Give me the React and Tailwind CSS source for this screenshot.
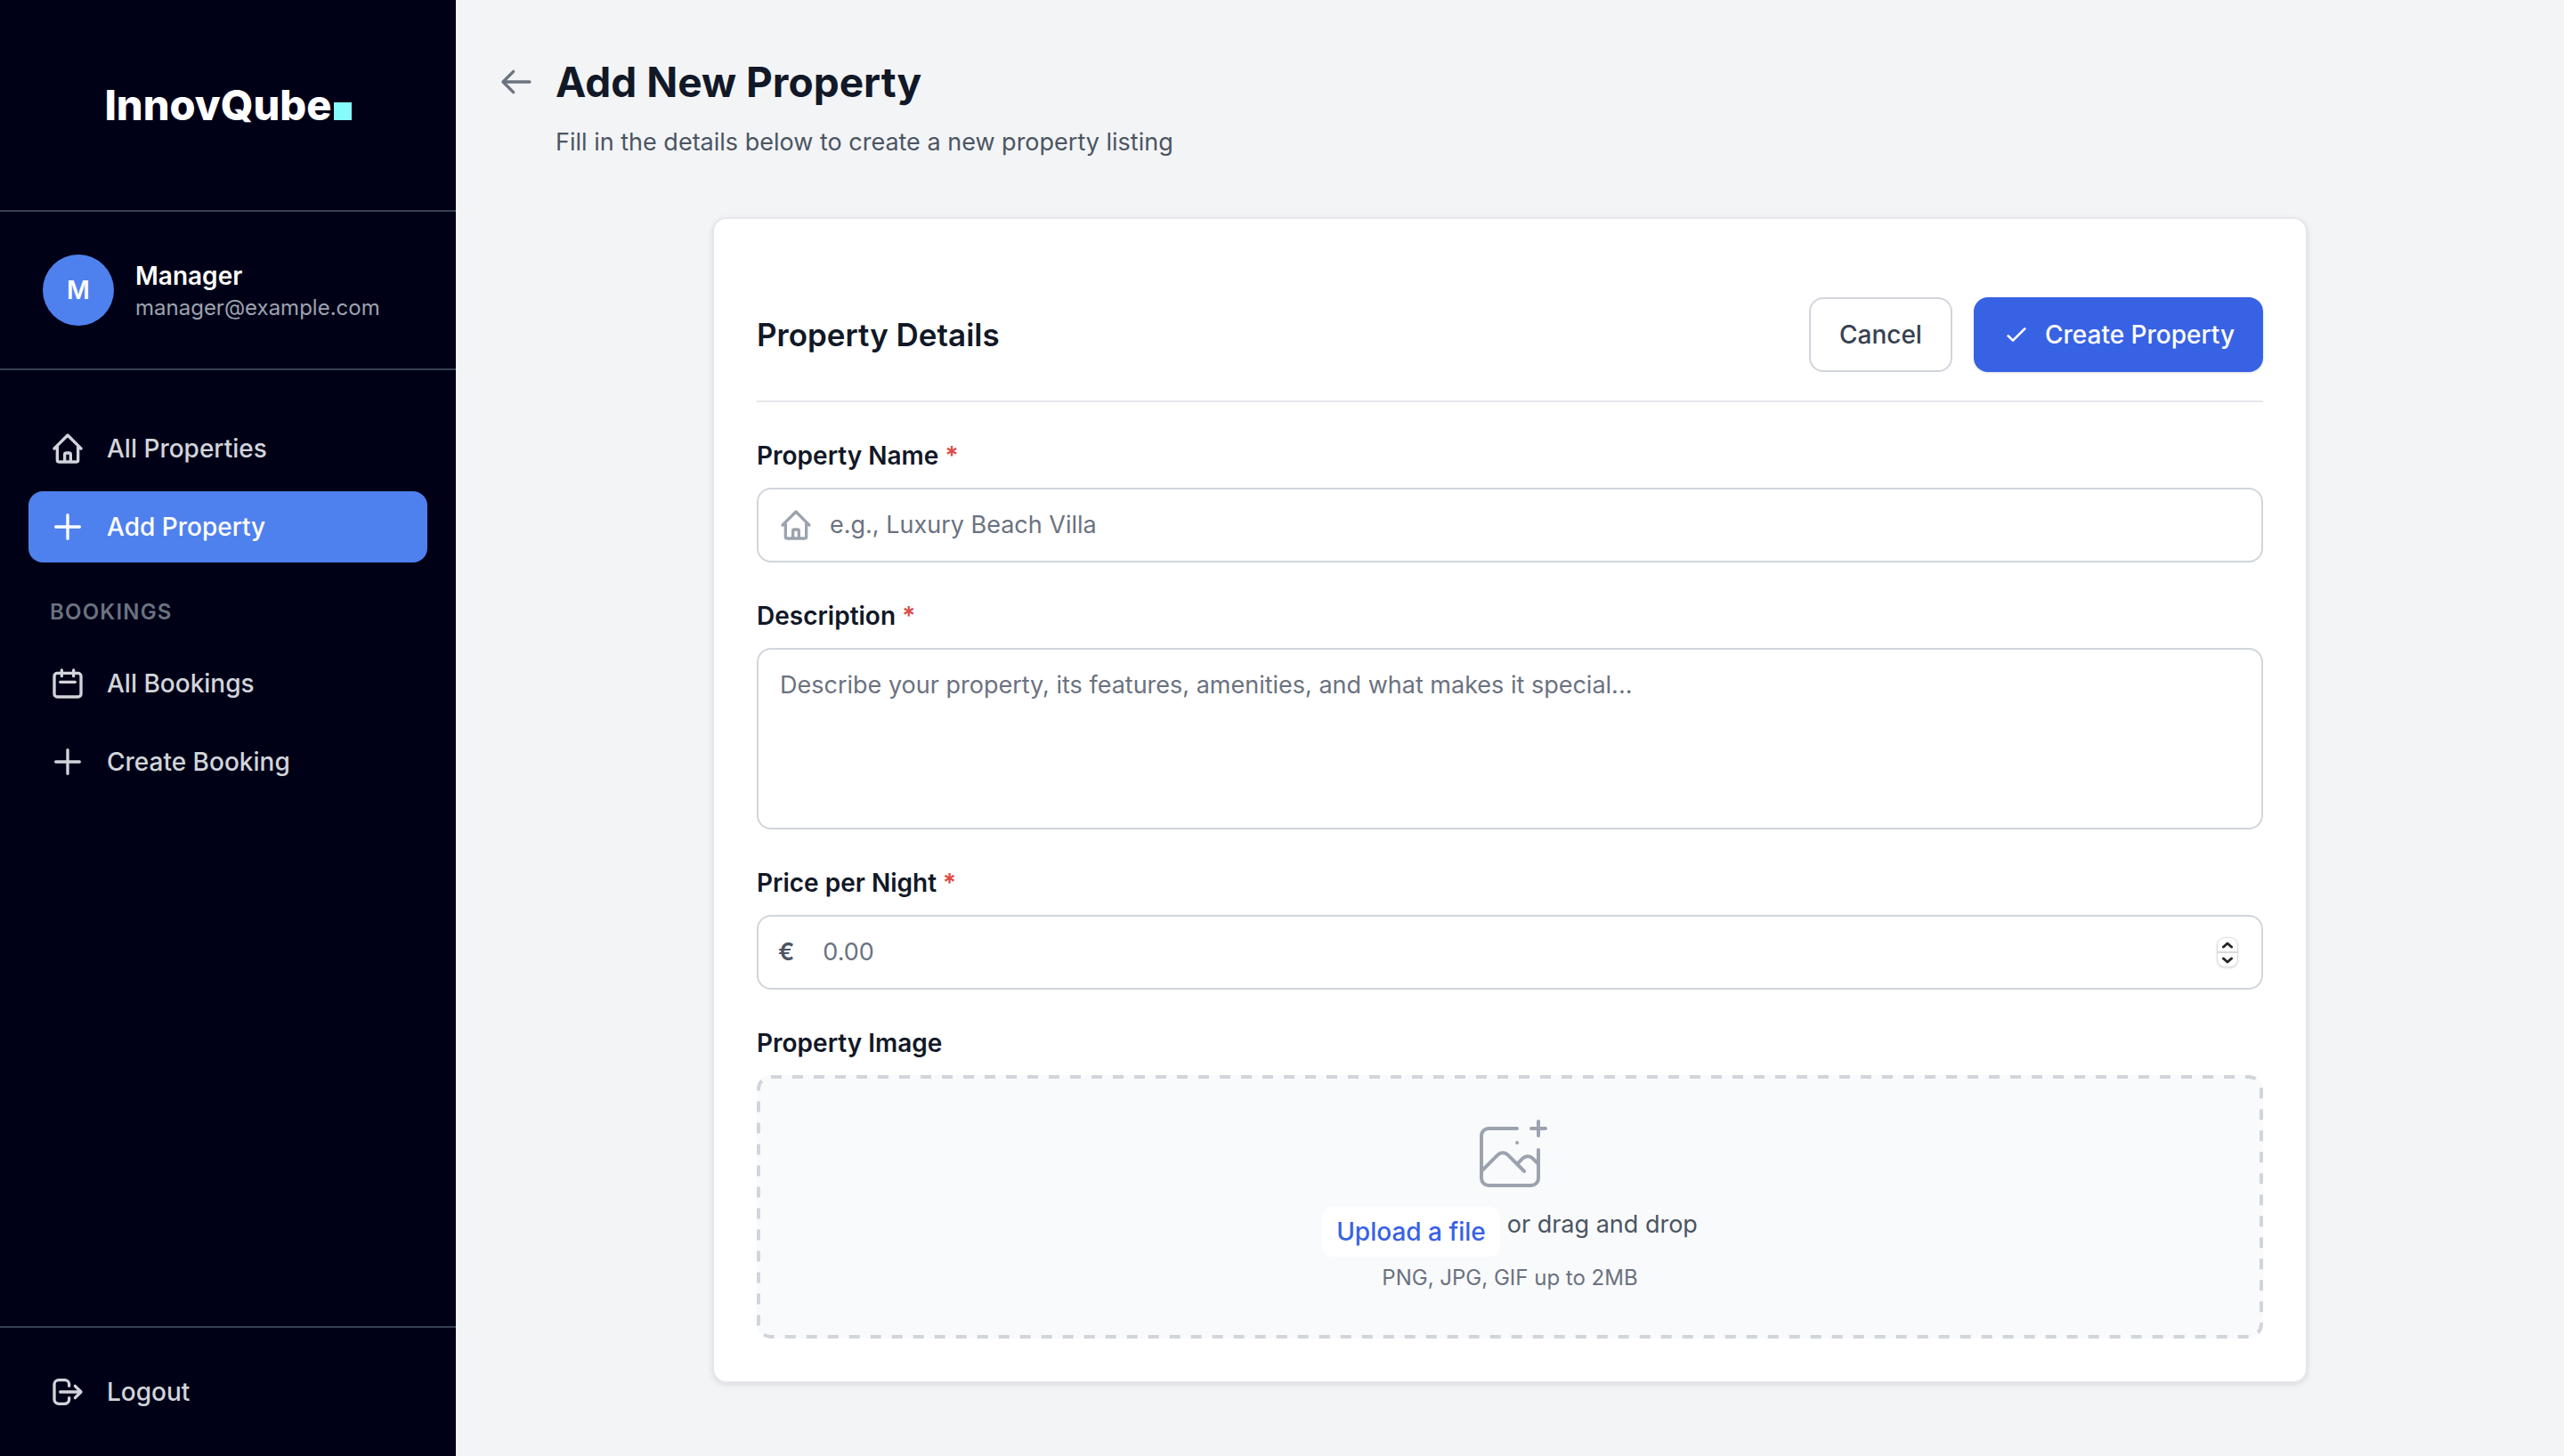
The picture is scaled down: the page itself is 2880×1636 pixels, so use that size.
import React from "react";

const paths = {
  home: "M3 12l2-2m0 0l7-7 7 7M5 10v10a1 1 0 001 1h3m10-11l2 2m-2-2v10a1 1 0 01-1 1h-3m-6 0a1 1 0 001-1v-4a1 1 0 011-1h2a1 1 0 011 1v4a1 1 0 001 1m-6 0h6",
  plus: "M12 4v16m8-8H4",
  calendar: "M8 7V3m8 4V3m-9 8h10M5 21h14a2 2 0 002-2V7a2 2 0 00-2-2H5a2 2 0 00-2 2v12a2 2 0 002 2z",
  logout: "M17 16l4-4m0 0l-4-4m4 4H7m6 4v1a3 3 0 01-3 3H6a3 3 0 01-3-3V7a3 3 0 013-3h4a3 3 0 013 3v1",
  back: "M10 19l-7-7m0 0l7-7m-7 7h18",
  check: "M5 13l4 4L19 7",
};

function Icon({ name, className }) {
  return (
    <svg className={className} viewBox="0 0 24 24" fill="none" stroke="currentColor" strokeWidth="2" strokeLinecap="round" strokeLinejoin="round" aria-hidden="true">
      <path d={paths[name]} />
    </svg>
  );
}

function NavItem({ icon, children, active }) {
  return (
    <a
      href="#"
      aria-current={active ? "page" : undefined}
      className={
        active
          ? "flex h-20 items-center gap-6 rounded-2xl bg-[#4f81ee] px-6 font-medium text-white"
          : "flex h-20 items-center gap-6 rounded-2xl px-6 font-medium text-[#d1d5db]"
      }
    >
      <Icon name={icon} className="size-10" />
      {children}
    </a>
  );
}

function Sidebar() {
  return (
    <aside className="flex w-[512px] shrink-0 flex-col bg-[#000117] text-[28px] leading-10">
      <div className="flex h-[238px] items-center justify-center border-b-2 border-[#374151]">
        <div className="flex items-baseline gap-0.5 text-[47px] leading-[56px] font-extrabold text-white">
          InnovQube
          <span className="size-5 bg-[#86fbfb]" />
        </div>
      </div>

      <div className="flex items-center gap-6 border-b-2 border-[#374151] p-12">
        <div className="flex size-20 items-center justify-center rounded-full bg-[#4f81ee] font-semibold text-white">M</div>
        <div>
          <p className="font-semibold text-white">Manager</p>
          <p className="text-2xl leading-8 text-[#9ca3af]">manager@example.com</p>
        </div>
      </div>

      <nav className="flex flex-1 flex-col gap-2 px-8 py-12">
        <NavItem icon="home">All Properties</NavItem>
        <NavItem icon="plus" active>Add Property</NavItem>
        <h2 className="px-6 py-4 pt-8 text-2xl leading-8 font-semibold tracking-wider text-[#6b7280] uppercase">Bookings</h2>
        <NavItem icon="calendar">All Bookings</NavItem>
        <NavItem icon="plus">Create Booking</NavItem>
      </nav>

      <div className="border-t-2 border-[#374151] p-8">
        <button type="button" className="flex h-20 w-full items-center gap-6 rounded-2xl px-6 font-medium text-[#d1d5db]">
          <Icon name="logout" className="size-10" />
          Logout
        </button>
      </div>
    </aside>
  );
}

function Label({ htmlFor, required, children }) {
  return (
    <label htmlFor={htmlFor} className="mb-4 block font-semibold text-[#111827]">
      {children} {required && <span className="text-[#dc4c46]">*</span>}
    </label>
  );
}

function Spinner() {
  return (
    <span className="mr-1 flex h-[34px] w-6 flex-col overflow-hidden rounded-[9px] border border-[#dcdcdc] bg-white text-[#262626] shadow-sm">
      <button type="button" aria-label="Increase price" className="flex flex-1 items-center justify-center border-b-2 border-[#d9d9d9]">
        <svg className="h-2 w-3" viewBox="0 0 12 8" fill="none" stroke="currentColor" strokeWidth="3" strokeLinecap="round" strokeLinejoin="round">
          <path d="M1.5 6 6 2l4.500 4" />
        </svg>
      </button>
      <button type="button" aria-label="Decrease price" className="flex flex-1 items-center justify-center">
        <svg className="h-2 w-3" viewBox="0 0 12 8" fill="none" stroke="currentColor" strokeWidth="3" strokeLinecap="round" strokeLinejoin="round">
          <path d="M1.5 2 6 6l4.500-4" />
        </svg>
      </button>
    </span>
  );
}

function Dropzone() {
  return (
    <div className="relative flex flex-col items-center rounded-2xl bg-[#f9fafb] px-11 pt-11 pb-13">
      <svg className="pointer-events-none absolute inset-0 size-full" aria-hidden="true">
        <rect
          className="h-[calc(100%-4px)] w-[calc(100%-4px)]"
          x="2"
          y="2"
          rx="14"
          fill="none"
          stroke="#d1d5db"
          strokeWidth="4"
          strokeDasharray="12 12"
        />
      </svg>
      <svg className="size-24 text-[#9ca3af]" viewBox="0 0 48 48" fill="none" stroke="currentColor" strokeWidth="2" strokeLinecap="round" strokeLinejoin="round" aria-hidden="true">
        <path d="M28 8H12a4 4 0 00-4 4v20m32-12v8m0 0v8a4 4 0 01-4 4H12a4 4 0 01-4-4v-4m32-4l-3.172-3.172a4 4 0 00-5.656 0L28 28M8 32l9.172-9.172a4 4 0 015.656 0L28 28m0 0l4 4m4-24h8m-4-4v8m-12 4h.02" />
      </svg>
      <div className="mt-2 flex gap-2">
        <label htmlFor="image" className="cursor-pointer rounded-xl bg-white px-4 py-2 font-medium text-[#3862e4]">
          Upload a file
          <input id="image" type="file" accept="image/*" className="sr-only" />
        </label>
        <p className="text-[27px] text-[#4b5563]">or drag and drop</p>
      </div>
      <p className="mt-2 text-2xl leading-8 text-[#6b7280]">PNG, JPG, GIF up to 2MB</p>
    </div>
  );
}

const field = "border-2 border-[#d1d5db] bg-white rounded-2xl text-[27px]";

export default function App() {
  return (
    <div className="flex min-h-screen bg-[#f3f4f6] font-['Inter',sans-serif]">
      <Sidebar />
      <main className="flex-1 px-12 pt-15 pb-12 text-[28px] leading-10">
        <header className="flex gap-6">
          <a href="#" aria-label="Back" className="flex h-16 items-center text-[#6b7280]">
            <Icon name="back" className="size-10" />
          </a>
          <div>
            <h1 className="text-[46px] leading-16 font-bold text-[#111827]">Add New Property</h1>
            <p className="mt-4 text-[27px] text-[#4b5563]">Fill in the details below to create a new property listing</p>
          </div>
        </header>

        <form className="mx-auto mt-16 max-w-[1792px] rounded-2xl border-2 border-[#e5e7eb] bg-white px-12 pt-22 pb-12 shadow-[0_2px_6px_rgba(0,0,0,0.1)]">
          <div className="flex items-center justify-between border-b-2 border-[#e5e7eb] pb-8">
            <h2 className="text-[35px] leading-14 font-semibold text-[#111827]">Property Details</h2>
            <div className="flex gap-6">
              <button type="button" className="h-21 rounded-2xl border-2 border-[#d1d5db] bg-white px-8 font-medium text-[#374151]">
                Cancel
              </button>
              <button type="submit" className="flex h-21 items-center gap-4 rounded-2xl bg-[#3862e4] px-8 font-medium text-white shadow-sm">
                <Icon name="check" className="size-8" />
                Create Property
              </button>
            </div>
          </div>

          <div className="mt-10 flex flex-col gap-10">
            <div>
              <Label htmlFor="name" required>Property Name</Label>
              <div className={`${field} flex h-21 items-center gap-4.5 px-5.5`}>
                <Icon name="home" className="size-10 shrink-0 text-[#9ca3af]" />
                <input id="name" type="text" placeholder="e.g., Luxury Beach Villa" className="min-w-0 flex-1 outline-none placeholder:text-[#6b7280]" />
              </div>
            </div>

            <div>
              <Label htmlFor="description" required>Description</Label>
              <textarea
                id="description"
                rows={4}
                placeholder="Describe your property, its features, amenities, and what makes it special..."
                className={`${field} block w-full resize-none px-6 py-5 outline-none placeholder:text-[#6b7280]`}
              />
            </div>

            <div>
              <Label htmlFor="price" required>Price per Night</Label>
              <div className={`${field} flex h-21 items-center gap-8 px-5.5`}>
                <span className="font-semibold text-[#4b5563]">€</span>
                <input
                  id="price"
                  type="number"
                  step="0.01"
                  placeholder="0.00"
                  className="min-w-0 flex-1 [appearance:textfield] outline-none placeholder:text-[#6b7280]"
                />
                <Spinner />
              </div>
            </div>

            <div>
              <Label htmlFor="image">Property Image</Label>
              <Dropzone />
            </div>
          </div>
        </form>
      </main>
    </div>
  );
}
